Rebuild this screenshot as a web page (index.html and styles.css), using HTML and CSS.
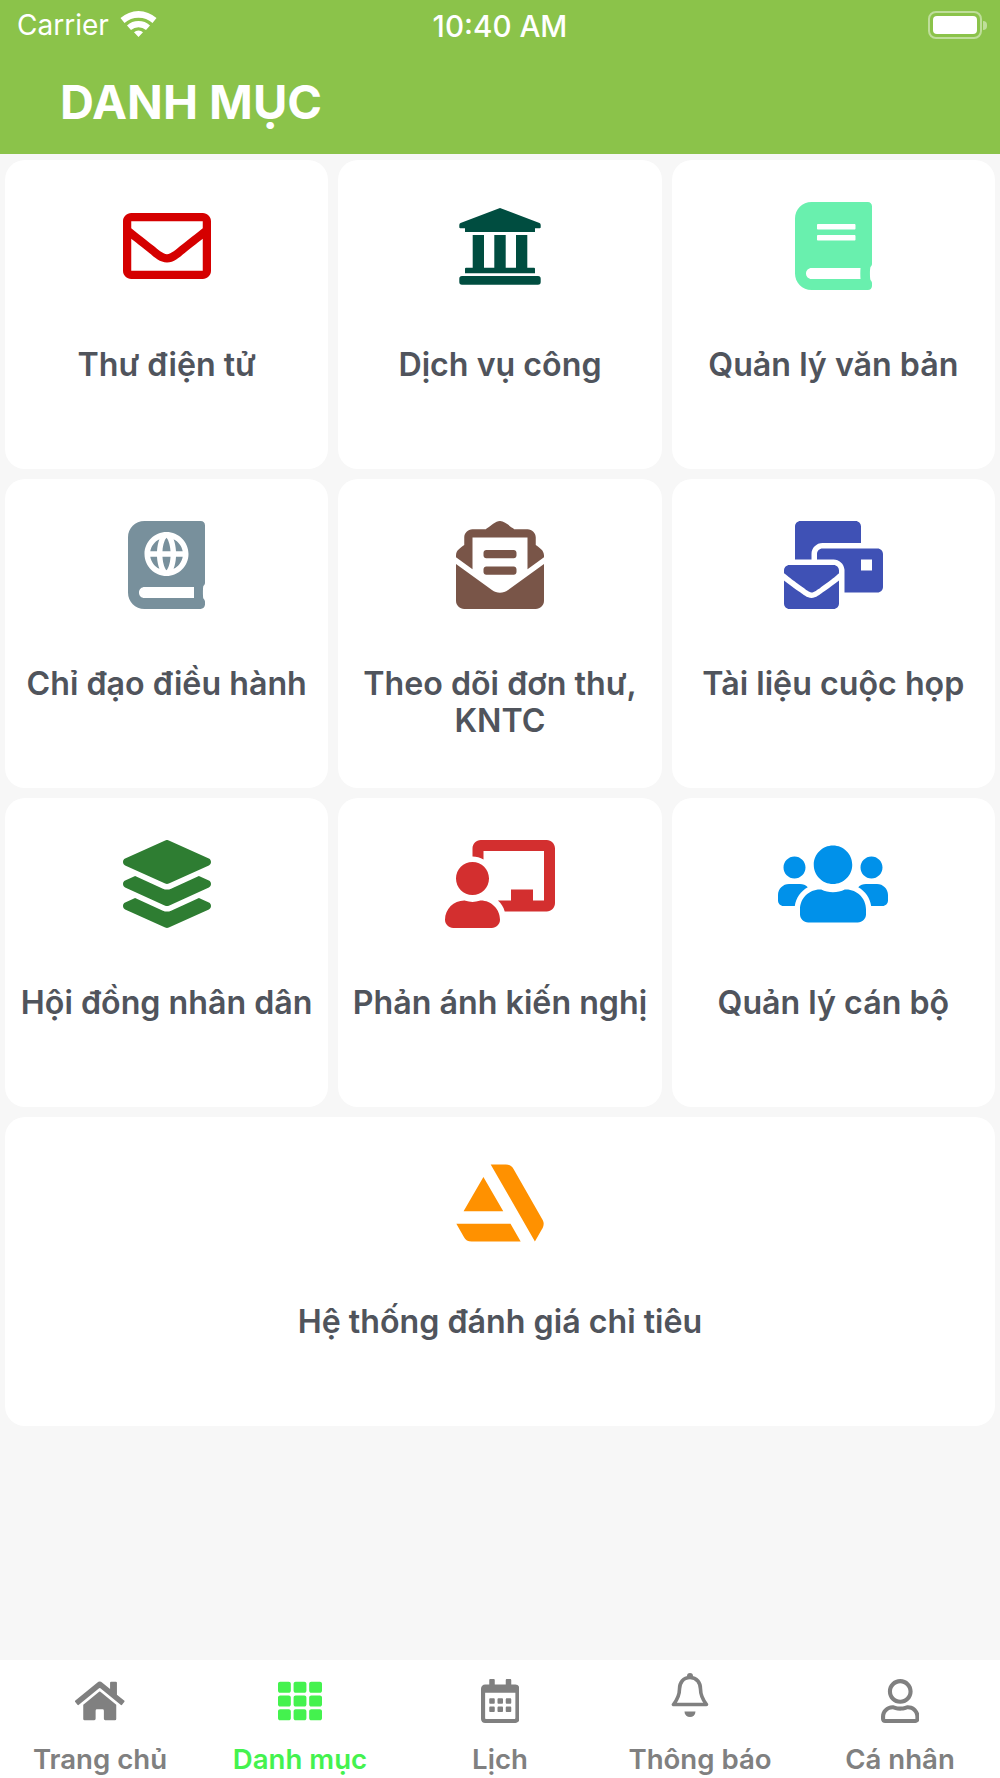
FILE: index.html
```html
<!DOCTYPE html>
<html lang="vi">
<head>
  <meta charset="UTF-8" />
  <meta name="viewport" content="width=device-width, initial-scale=1.0" />
  <title>Danh mục</title>
  <link rel="stylesheet" href="styles.css">
</head>
<body>
  <div class="app">
    <header class="header">
      <div class="status-bar">
        <div class="status-left">
          <span>Carrier</span>
          <svg class="wifi" viewBox="0 0 37 27"><path d="M.5 8A27 27 0 0 1 36.500 8L32.500 13A21 21 0 0 0 4.500 13zM7 15.500A17 17 0 0 1 30 15.500L26 20A11.500 11.500 0 0 0 11 20zM14 22.200A6.500 6.500 0 0 1 23 22.200L18.500 27z"/></svg>
        </div>
        <div class="status-time">10:40 AM</div>
        <div class="status-right">
          <div class="battery"><div class="battery-fill"></div></div>
          <div class="battery-cap"></div>
        </div>
      </div>
      <h1 class="title">DANH MỤC</h1>
    </header>

    <main class="menu-grid">
      <a class="card">
        <svg class="card-icon icon-mail" viewBox="0 0 512 512"><path d="M464 64H48C21.49 64 0 85.49 0 112v288c0 26.51 21.49 48 48 48h416c26.51 0 48-21.49 48-48V112c0-26.51-21.49-48-48-48zm0 48v40.805c-22.422 18.259-58.168 46.651-134.587 106.49-16.841 13.247-50.201 45.072-73.413 44.701-23.208.375-56.579-31.459-73.413-44.701C106.18 199.465 70.425 171.067 48 152.805V112h416zM48 400V214.398c22.914 18.251 55.409 43.862 104.938 82.646 21.857 17.205 60.134 55.186 103.062 54.955 42.717.231 80.509-37.199 103.053-54.947 49.528-38.783 82.032-64.401 104.947-82.653V400H48z"/></svg>
        <div class="card-label">Thư điện tử</div>
      </a>
      <a class="card">
        <svg class="card-icon icon-public" viewBox="0 0 88 88"><path d="M44 6L83.500 21Q84.700 21.500 84.700 23V25.300Q84.700 26.300 83.700 26.300H79V30H9V26.300H4.300Q3.300 26.300 3.300 25.300V23Q3.300 21.500 4.500 21zM16.700 33H28V65.700H16.700zM38.300 33H49.700V65.700H38.300zM60 33H71.300V65.700H60zM10 65.700H78Q79 65.700 79 66.700V71.300H9V66.700Q9 65.700 10 65.700zM6 74H82Q84.700 74 84.700 76.700V80Q84.700 82.700 82 82.700H6Q3.300 82.700 3.300 80V76.700Q3.300 74 6 74z"/></svg>
        <div class="card-label">Dịch vụ công</div>
      </a>
      <a class="card">
        <svg class="card-icon icon-docs" viewBox="0 0 448 512"><path d="M448 360V24c0-13.300-10.700-24-24-24H96C43 0 0 43 0 96v320c0 53 43 96 96 96h328c13.300 0 24-10.700 24-24v-16c0-7.500-3.500-14.300-8.900-18.700-4.200-15.400-4.200-59.300 0-74.700 5.400-4.300 8.900-11.100 8.900-18.600zM128 134c0-3.300 2.700-6 6-6h212c3.300 0 6 2.700 6 6v20c0 3.300-2.700 6-6 6H134c-3.300 0-6-2.700-6-6v-20zm0 64c0-3.300 2.700-6 6-6h212c3.300 0 6 2.700 6 6v20c0 3.300-2.700 6-6 6H134c-3.300 0-6-2.700-6-6v-20zm253.400 250H96c-17.700 0-32-14.300-32-32 0-17.600 14.400-32 32-32h285.400c-1.900 17.100-1.900 46.900 0 64z"/></svg>
        <div class="card-label">Quản lý văn bản</div>
      </a>
      <a class="card">
        <svg class="card-icon icon-atlas" viewBox="0 0 448 512"><path d="M318.38 208h-39.090c-1.490 27.030-6.540 51.350-14.210 70.410 27.710-13.240 48.020-39.190 53.300-70.410zm0-32c-5.290-31.220-25.590-57.170-53.300-70.410 7.680 19.060 12.720 43.380 14.210 70.410h39.090zM224 97.310c-7.690 7.450-20.770 34.420-23.430 78.690h46.870C244.770 131.730 231.690 104.760 224 97.310zm-41.080 8.280c-27.710 13.240-48.020 39.190-53.300 70.410h39.090c1.490-27.030 6.530-51.350 14.210-70.410zm0 172.820c-7.680-19.060-12.720-43.380-14.210-70.410h-39.090c5.280 31.220 25.590 57.170 53.300 70.410zM247.43 208h-46.870c2.660 44.260 15.740 71.240 23.430 78.690 7.700-7.450 20.780-34.430 23.440-78.690zM448 358.400V25.600c0-16-9.600-25.600-25.600-25.600H96C41.600 0 0 41.600 0 96v320c0 54.400 41.600 96 96 96h326.400c12.800 0 25.600-9.600 25.600-25.600v-16c0-6.400-3.200-12.800-9.600-19.200-3.200-16-3.200-60.800 0-73.600 6.400-3.200 9.600-9.600 9.600-19.200zM224 64c70.690 0 128 57.310 128 128s-57.310 128-128 128S96 262.690 96 192 153.310 64 224 64zm160 384H96c-19.200 0-32-12.800-32-32s16-32 32-32h288v64z"/></svg>
        <div class="card-label">Chỉ đạo điều hành</div>
      </a>
      <a class="card">
        <svg class="card-icon icon-letter" viewBox="0 0 512 512"><path d="M176 216h160c8.840 0 16-7.160 16-16v-16c0-8.840-7.160-16-16-16H176c-8.840 0-16 7.160-16 16v16c0 8.840 7.160 16 16 16zm-16 80c0 8.840 7.160 16 16 16h160c8.840 0 16-7.160 16-16v-16c0-8.840-7.160-16-16-16H176c-8.840 0-16 7.160-16 16v16zm96 121.130c-16.420 0-32.840-5.060-46.860-15.190L0 250.860V464c0 26.510 21.490 48 48 48h416c26.510 0 48-21.490 48-48V250.860L302.860 401.940c-14.020 10.120-30.440 15.190-46.860 15.190zm237.610-254.180c-8.850-6.940-17.240-13.470-29.610-22.810V96c0-26.510-21.490-48-48-48h-77.550c-3.040-2.200-5.870-4.260-9.040-6.560C312.600 29.170 279.200-.35 256 0c-23.200-.35-56.590 29.170-73.410 41.440-3.170 2.300-6 4.360-9.040 6.560H96c-26.510 0-48 21.490-48 48v44.140c-12.370 9.330-20.760 15.870-29.610 22.810A47.995 47.995 0 0 0 0 200.720v10.650l96 69.350V96h320v184.720l96-69.350v-10.650c0-14.740-6.780-28.670-18.390-37.770z"/></svg>
        <div class="card-label">Theo dõi đơn thư, KNTC</div>
      </a>
      <a class="card">
        <svg class="card-icon icon-meeting" viewBox="0 0 576 512"><path d="M160 448c-25.600 0-51.200-22.400-64-32-64-44.800-83.200-60.800-96-70.400V480c0 17.670 14.330 32 32 32h256c17.670 0 32-14.330 32-32V345.600c-12.800 9.600-32 25.600-96 70.400-12.800 9.600-38.400 32-64 32zm128-192H32c-17.670 0-32 14.330-32 32v16c25.600 19.200 22.400 19.200 115.200 86.400 9.600 6.400 28.800 25.600 44.800 25.600s35.200-19.200 44.800-22.400c92.800-67.200 89.600-67.200 115.200-89.600V288c0-17.670-14.330-32-32-32zm256-96H224c-17.670 0-32 14.330-32 32v32h96c33.210 0 60.590 25.380 63.680 57.750l.32-.25V416h192c17.670 0 32-14.330 32-32V192c0-17.670-14.330-32-32-32zm-32 128h-64v-64h64v64zm-352-96c0-35.290 28.710-64 64-64h224V32c0-17.670-14.330-32-32-32H96C78.330 0 64 14.330 64 32v192h96v-32z"/></svg>
        <div class="card-label">Tài liệu cuộc họp</div>
      </a>
      <a class="card">
        <svg class="card-icon icon-layers" viewBox="0 0 512 512"><path d="M12.410 148.020l232.940 105.670c6.800 3.090 14.490 3.090 21.290 0l232.940-105.670c16.550-7.510 16.550-32.520 0-40.030L266.650 2.310a25.607 25.607 0 0 0-21.290 0L12.410 107.980c-16.550 7.510-16.550 32.530 0 40.040zm487.180 88.280l-58.090-26.330-161.640 73.270c-7.560 3.430-15.590 5.170-23.860 5.170s-16.290-1.740-23.860-5.170L70.510 209.970l-58.100 26.330c-16.550 7.500-16.550 32.500 0 40l232.940 105.590c6.800 3.080 14.490 3.080 21.290 0L499.590 276.300c16.550-7.500 16.550-32.500 0-40zm0 127.800l-57.870-26.230-161.860 73.370c-7.560 3.430-15.590 5.170-23.860 5.170s-16.290-1.740-23.860-5.170L70.290 337.870 12.410 364.100c-16.550 7.500-16.550 32.500 0 40l232.940 105.590c6.800 3.080 14.490 3.080 21.290 0L499.590 404.100c16.550-7.500 16.550-32.500 0-40z"/></svg>
        <div class="card-label">Hội đồng nhân dân</div>
      </a>
      <a class="card">
        <svg class="card-icon icon-teacher" viewBox="0 0 640 512"><path d="M208 352c-2.390 0-4.780.35-7.060 1.090C187.980 357.300 174.350 360 160 360c-14.350 0-27.980-2.700-40.950-6.910-2.280-.74-4.660-1.090-7.050-1.090C49.940 352-.33 402.480 0 464.620.14 490.880 21.730 512 48 512h224c26.270 0 47.860-21.120 48-47.380.33-62.140-49.940-112.620-112-112.620zm-48-32c53.020 0 96-42.980 96-96s-42.980-96-96-96-96 42.980-96 96 42.980 96 96 96zM592 0H208c-26.470 0-48 22.250-48 49.590V96c23.420 0 45.100 6.780 64 17.800V64h352v288h-64v-64H384v64h-76.240c19.100 16.690 33.120 38.730 39.690 64H592c26.470 0 48-22.250 48-49.590V49.590C640 22.250 618.470 0 592 0z"/></svg>
        <div class="card-label">Phản ánh kiến nghị</div>
      </a>
      <a class="card">
        <svg class="card-icon icon-users" viewBox="0 0 640 512"><path d="M96 224c35.300 0 64-28.700 64-64s-28.700-64-64-64-64 28.700-64 64 28.700 64 64 64zm448 0c35.300 0 64-28.700 64-64s-28.700-64-64-64-64 28.700-64 64 28.700 64 64 64zm32 32h-64c-17.600 0-33.500 7.100-45.100 18.600 40.300 22.100 68.900 62 75.100 109.400h66c17.700 0 32-14.300 32-32v-32c0-35.300-28.700-64-64-64zm-256 0c61.900 0 112-50.100 112-112S381.900 32 320 32 208 82.100 208 144s50.100 112 112 112zm76.800 32h-8.300c-20.800 10-43.900 16-68.500 16s-47.600-6-68.500-16h-8.300C179.600 288 128 339.600 128 403.200V432c0 26.500 21.500 48 48 48h288c26.500 0 48-21.500 48-48v-28.800c0-63.600-51.600-115.200-115.200-115.200zm-223.700-13.400C161.500 263.100 145.600 256 128 256H64c-35.300 0-64 28.700-64 64v32c0 17.700 14.300 32 32 32h65.900c6.300-47.400 34.900-87.300 75.200-109.400z"/></svg>
        <div class="card-label">Quản lý cán bộ</div>
      </a>
      <a class="card card-wide">
        <svg class="card-icon icon-rating" viewBox="0 0 512 512"><path d="M2 377.400l43 74.300A51.350 51.350 0 0 0 90.900 480h285.400l-59.200-102.600zM501.800 350L335.600 59.300A51.380 51.380 0 0 0 290.200 32h-88.400l257.300 447.600 40.700-70.500c1.900-3.200 21-29.700 2-59.100zM275 304.500l-115.500-200L44 304.500z"/></svg>
        <div class="card-label">Hệ thống đánh giá chỉ tiêu</div>
      </a>
    </main>

    <nav class="tab-bar">
      <a class="tab">
        <svg class="tab-icon" viewBox="0 0 576 512"><path d="M280.370 148.260L96 300.110V464a16 16 0 0 0 16 16l112.060-.29a16 16 0 0 0 15.920-16V368a16 16 0 0 1 16-16h64a16 16 0 0 1 16 16v95.640a16 16 0 0 0 16 16.050L464 480a16 16 0 0 0 16-16V300L295.670 148.260a12.190 12.190 0 0 0-15.300 0zM571.600 251.470L488 182.560V44.050a12 12 0 0 0-12-12h-56a12 12 0 0 0-12 12v72.610L318.470 43a48 48 0 0 0-61 0L4.340 251.470a12 12 0 0 0-1.600 16.900l25.500 31A12 12 0 0 0 45.150 301l235.220-193.740a12.190 12.190 0 0 1 15.300 0L530.900 301a12 12 0 0 0 16.900-1.600l25.500-31a12 12 0 0 0-1.700-16.930z"/></svg>
        <span>Trang chủ</span>
      </a>
      <a class="tab tab-active">
        <svg class="tab-icon" viewBox="0 0 512 512"><path d="M149.333 56v80c0 13.255-10.745 24-24 24H24c-13.255 0-24-10.745-24-24V56c0-13.255 10.745-24 24-24h101.333c13.255 0 24 10.745 24 24zm181.334 240v-80c0-13.255-10.745-24-24-24H205.333c-13.255 0-24 10.745-24 24v80c0 13.255 10.745 24 24 24h101.333c13.256 0 24.001-10.745 24.001-24zm32-240v80c0 13.255 10.745 24 24 24H488c13.255 0 24-10.745 24-24V56c0-13.255-10.745-24-24-24H386.667c-13.255 0-24 10.745-24 24zm-32 80V56c0-13.255-10.745-24-24-24H205.333c-13.255 0-24 10.745-24 24v80c0 13.255 10.745 24 24 24h101.333c13.256 0 24.001-10.745 24.001-24zm-205.334 56H24c-13.255 0-24 10.745-24 24v80c0 13.255 10.745 24 24 24h101.333c13.255 0 24-10.745 24-24v-80c0-13.255-10.745-24-24-24zM0 376v80c0 13.255 10.745 24 24 24h101.333c13.255 0 24-10.745 24-24v-80c0-13.255-10.745-24-24-24H24c-13.255 0-24 10.745-24 24zm386.667-56H488c13.255 0 24-10.745 24-24v-80c0-13.255-10.745-24-24-24H386.667c-13.255 0-24 10.745-24 24v80c0 13.255 10.745 24 24 24zm0 160H488c13.255 0 24-10.745 24-24v-80c0-13.255-10.745-24-24-24H386.667c-13.255 0-24 10.745-24 24v80c0 13.255 10.745 24 24 24zM181.333 376v80c0 13.255 10.745 24 24 24h101.333c13.255 0 24-10.745 24-24v-80c0-13.255-10.745-24-24-24H205.333c-13.255 0-24 10.745-24 24z"/></svg>
        <span>Danh mục</span>
      </a>
      <a class="tab">
        <svg class="tab-icon" viewBox="0 0 448 512"><path d="M148 288h-40c-6.600 0-12-5.400-12-12v-40c0-6.600 5.400-12 12-12h40c6.600 0 12 5.400 12 12v40c0 6.600-5.400 12-12 12zm108-12v-40c0-6.600-5.400-12-12-12h-40c-6.600 0-12 5.400-12 12v40c0 6.600 5.400 12 12 12h40c6.600 0 12-5.400 12-12zm96 0v-40c0-6.600-5.400-12-12-12h-40c-6.600 0-12 5.400-12 12v40c0 6.600 5.400 12 12 12h40c6.600 0 12-5.400 12-12zm-96 96v-40c0-6.600-5.400-12-12-12h-40c-6.600 0-12 5.400-12 12v40c0 6.600 5.400 12 12 12h40c6.600 0 12-5.400 12-12zm-96 0v-40c0-6.600-5.400-12-12-12h-40c-6.600 0-12 5.400-12 12v40c0 6.600 5.400 12 12 12h40c6.600 0 12-5.400 12-12zm192 0v-40c0-6.600-5.400-12-12-12h-40c-6.600 0-12 5.400-12 12v40c0 6.600 5.400 12 12 12h40c6.600 0 12-5.400 12-12zm96-260v352c0 26.500-21.500 48-48 48H48c-26.500 0-48-21.500-48-48V112c0-26.500 21.500-48 48-48h48V12c0-6.600 5.400-12 12-12h40c6.600 0 12 5.400 12 12v52h128V12c0-6.600 5.400-12 12-12h40c6.600 0 12 5.400 12 12v52h48c26.500 0 48 21.500 48 48zm-48 346V160H48v298c0 3.300 2.700 6 6 6h340c3.300 0 6-2.700 6-6z"/></svg>
        <span>Lịch</span>
      </a>
      <a class="tab">
        <svg class="tab-icon tab-bell" viewBox="0 0 38 44">
          <circle cx="19" cy="3" r="3"/>
          <path class="bell-body" d="M19 4.500C12 4.500 8.500 10 8.500 16C8.500 23 6 27 2.500 31.500H35.500C32 27 29.500 23 29.500 16C29.500 10 26 4.500 19 4.500Z"/>
          <path d="M13.500 38.500H24.500A5.500 5.500 0 0 1 13.500 38.500Z"/>
        </svg>
        <span>Thông báo</span>
      </a>
      <a class="tab">
        <svg class="tab-icon" viewBox="0 0 448 512"><path d="M313.600 304c-28.700 0-42.500 16-89.600 16-47.100 0-60.800-16-89.600-16C60.200 304 0 364.200 0 438.400V464c0 26.500 21.500 48 48 48h352c26.500 0 48-21.500 48-48v-25.600c0-74.200-60.200-134.400-134.400-134.400zM400 464H48v-25.600c0-47.600 38.800-86.400 86.400-86.400 14.600 0 38.300 16 89.600 16 51.700 0 74.900-16 89.600-16 47.600 0 86.400 38.800 86.400 86.400V464zM224 288c79.500 0 144-64.500 144-144S303.500 0 224 0 80 64.500 80 144s64.500 144 144 144zm0-240c52.900 0 96 43.100 96 96s-43.100 96-96 96-96-43.100-96-96 43.100-96 96-96z"/></svg>
        <span>Cá nhân</span>
      </a>
    </nav>
  </div>
</body>
</html>
```

FILE: styles.css
```css
* {
  box-sizing: border-box;
}
body {
  margin: 0;
  font-family: Inter, "Liberation Sans", sans-serif;
  background: #f7f7f7;
}
.app {
  display: flex;
  flex-direction: column;
  height: 1778px;
}
.header {
  height: 154px;
  background: #8bc34a;
  color: #fff;
}
.status-bar {
  display: grid;
  grid-template-columns: 1fr auto 1fr;
  align-items: center;
  height: 50px;
  padding: 0 17px;
  font-size: 28px;
}
.status-left {
  display: flex;
  align-items: center;
  gap: 11px;
}
.wifi {
  width: 37px;
  height: 27px;
  fill: #fff;
  margin-top: -3px;
}
.status-time {
  font-size: 29.6px;
  font-weight: 500;
  padding-top: 1px;
}
.status-right {
  display: flex;
  justify-content: flex-end;
  align-items: center;
  margin-right: -4px;
}
.battery {
  width: 54px;
  height: 28px;
  padding: 3px;
  border: 2px solid rgba(255, 255, 255, 0.45);
  border-radius: 8px;
}
.battery-fill {
  height: 100%;
  background: #fff;
  border-radius: 4px;
}
.battery-cap {
  width: 4px;
  height: 9px;
  margin-left: 1px;
  background: rgba(255, 255, 255, 0.45);
  border-radius: 0 4px 4px 0;
}
.title {
  margin: 0;
  padding: 23px 0 0 60px;
  font-size: 47px;
  line-height: 58px;
  font-weight: 700;
}
.menu-grid {
  flex: 1;
  display: grid;
  grid-template-columns: repeat(3, 1fr);
  grid-auto-rows: 309px;
  align-content: start;
  gap: 10px;
  padding: 6px 5px;
}
.card {
  display: flex;
  flex-direction: column;
  align-items: center;
  padding: 42px 8px 0;
  background: #fff;
  border-radius: 20px;
}
.card-wide {
  grid-column: 1 / -1;
}
.card-icon {
  height: 88px;
  flex: none;
}
.card-label {
  margin-top: 56px;
  font-size: 32.2px;
  line-height: 37px;
  font-weight: 600;
  color: #50545c;
  text-align: center;
}
.icon-mail { fill: #d50000; }
.icon-public { fill: #004d40; }
.icon-docs { fill: #69f0ae; }
.icon-atlas { fill: #78909c; }
.icon-letter { fill: #795548; }
.icon-meeting { fill: #3f51b5; }
.icon-layers { fill: #2e7d32; }
.icon-teacher { fill: #d32f2f; }
.icon-users { fill: #0091ea; }
.icon-rating { fill: #ff9100; }
.tab-bar {
  display: grid;
  grid-template-columns: repeat(5, 1fr);
  height: 118px;
  background: #fff;
}
.tab {
  display: flex;
  flex-direction: column;
  align-items: center;
  padding-top: 19px;
  color: #808080;
  font-size: 27.6px;
  line-height: 32px;
  font-weight: 600;
}
.tab-icon {
  height: 44px;
  margin-bottom: 20px;
  fill: currentColor;
}
.tab-bell {
  width: 38px;
  margin-right: 20px;
  margin-top: -6px;
  margin-bottom: 26px;
}
.bell-body {
  fill: none;
  stroke: currentColor;
  stroke-width: 3.6;
  stroke-linejoin: round;
}
.tab-active {
  color: #44f24e;
}
```
